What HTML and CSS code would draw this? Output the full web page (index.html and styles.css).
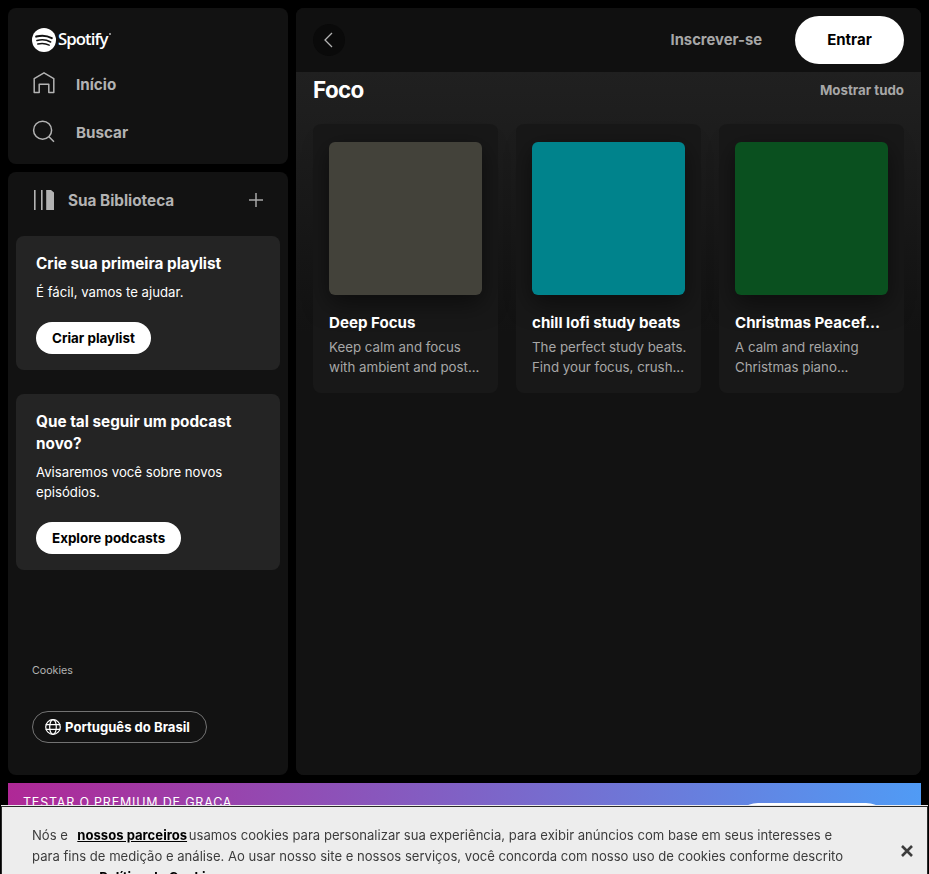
FILE: index.html
```html
<!DOCTYPE html>
<html lang="pt-BR">
<head>
    <meta charset="UTF-8">
    <meta name="viewport" content="width=device-width, initial-scale=1.0">
    <title>Spotify - Foco</title>
    <link rel="stylesheet" href="styles.css">
</head>
<body>
    <div class="app">
        <div class="sidebar">
            <nav class="nav-card">
                <a class="logo" href="#">
                    <svg width="24" height="24" viewBox="0 0 24 24">
                        <circle cx="12" cy="12" r="12" fill="#fff"/>
                        <path d="M4.2 8.6c5-1.4 11-1 15.6 1.5" fill="none" stroke="#121212" stroke-width="2.1" stroke-linecap="round"/>
                        <path d="M5 12.5c4.4-1.2 9.6-.8 13.6 1.4" fill="none" stroke="#121212" stroke-width="1.7" stroke-linecap="round"/>
                        <path d="M5.8 16c3.8-.9 8-.6 11.4 1.2" fill="none" stroke="#121212" stroke-width="1.4" stroke-linecap="round"/>
                    </svg>
                    <span class="logo-text">Spotify</span>
                </a>
                <a class="nav-item" href="#">
                    <svg width="24" height="24" viewBox="0 0 24 24" fill="none" stroke="#b3b3b3" stroke-width="1.5" stroke-linejoin="round">
                        <path d="M2.2 20.4V6.6L12 .8l9.8 5.8v13.8h-5v-8.2H7.2v8.2z"/>
                    </svg>
                    <span>Início</span>
                </a>
                <a class="nav-item" href="#">
                    <svg width="24" height="24" viewBox="0 0 24 24" fill="none" stroke="#b3b3b3" stroke-width="1.5">
                        <circle cx="10.6" cy="10.2" r="9"/>
                        <path d="M17 16.8l5 5"/>
                    </svg>
                    <span>Buscar</span>
                </a>
            </nav>

            <section class="library">
                <div class="library-head">
                    <svg width="20" height="20" viewBox="0 0 20 20" fill="#b3b3b3">
                        <rect x="0" y="0" width="1.6" height="20"/>
                        <rect x="7" y="0" width="1.6" height="20"/>
                        <path d="M12.2 0h4.8l3 2.5V20h-7.8z"/>
                    </svg>
                    <span class="library-title">Sua Biblioteca</span>
                    <svg class="plus" width="16" height="16" viewBox="0 0 16 16" stroke="#a7a7a7" stroke-width="1.5">
                        <path d="M8 1v14M1 8h14"/>
                    </svg>
                </div>

                <div class="promo">
                    <h3>Crie sua primeira playlist</h3>
                    <p>É fácil, vamos te ajudar.</p>
                    <a class="pill" href="#">Criar playlist</a>
                </div>

                <div class="promo">
                    <h3>Que tal seguir um podcast novo?</h3>
                    <p>Avisaremos você sobre novos episódios.</p>
                    <a class="pill" href="#">Explore podcasts</a>
                </div>

                <div class="library-foot">
                    <a class="cookies-link" href="#">Cookies</a>
                    <a class="lang" href="#">
                        <svg width="16" height="16" viewBox="0 0 16 16" fill="none" stroke="#fff" stroke-width="1.2">
                            <circle cx="8" cy="8" r="7.3"/>
                            <ellipse cx="8" cy="8" rx="3.3" ry="7.3"/>
                            <path d="M.7 5.6h14.6M.7 10.4h14.6"/>
                        </svg>
                        <span>Português do Brasil</span>
                    </a>
                </div>
            </section>
        </div>

        <main class="main">
            <header class="topbar">
                <button class="back">
                    <svg width="16" height="16" viewBox="0 0 16 16" fill="none" stroke="#b3b3b3" stroke-width="1.3">
                        <path d="M11 1L4 8l7 7"/>
                    </svg>
                </button>
                <a class="signup" href="#">Inscrever-se</a>
                <a class="login" href="#">Entrar</a>
            </header>

            <div class="content">
                <div class="section-head">
                    <h2>Foco</h2>
                    <a href="#">Mostrar tudo</a>
                </div>
                <div class="cards">
                    <div class="card">
                        <div class="cover cover-focus"></div>
                        <h4>Deep Focus</h4>
                        <p>Keep calm and focus with ambient and post...</p>
                    </div>
                    <div class="card">
                        <div class="cover cover-lofi"></div>
                        <h4>chill lofi study beats</h4>
                        <p>The perfect study beats. Find your focus, crush...</p>
                    </div>
                    <div class="card">
                        <div class="cover cover-xmas"></div>
                        <h4>Christmas Peacef...</h4>
                        <p>A calm and relaxing Christmas piano...</p>
                    </div>
                </div>
            </div>
        </main>

        <div class="banner">
            <span>TESTAR O PREMIUM DE GRAÇA</span>
            <a class="banner-btn" href="#"></a>
        </div>
    </div>

    <div class="cookie-bar">
        <p>Nós e &nbsp;<a class="partners" href="#">nossos parceiros</a> usamos cookies para personalizar sua experiência, para exibir anúncios com base em seus interesses e para fins de medição e análise. Ao usar nosso site e nossos serviços, você concorda com nosso uso de cookies conforme descrito em nossa <a class="plain" href="#">Política de Cookies</a>.</p>
        <svg class="cookie-close" width="12" height="12" viewBox="0 0 12 12" stroke="#3c3c3c" stroke-width="2.6">
            <path d="M1 1l10 10M11 1L1 11"/>
        </svg>
    </div>
</body>
</html>
```

FILE: styles.css
```css
* {
    box-sizing: border-box;
}

html, body {
    height: 100%;
}

body {
    background-color: #000000;
    color: #FFFFFF;
    font-family: Inter, "Noto Sans", sans-serif;
    margin: 0;
    padding: 0;
    overflow: hidden;
}

a {
    color: inherit;
    text-decoration: none;
}

.app {
    display: grid;
    grid-template-columns: 280px 625px;
    grid-template-rows: 767px 80px;
    gap: 8px;
    padding: 8px;
}

.sidebar {
    display: flex;
    flex-direction: column;
    gap: 8px;
    width: 280px;
}

.nav-card {
    background-color: #121212;
    border-radius: 8px;
    height: 156px;
    padding: 20px 24px 0;
}

.logo {
    display: flex;
    align-items: center;
    gap: 2px;
    height: 24px;
    margin-bottom: 8px;
}

.logo-text {
    font-family: "Open Sans", sans-serif;
    font-size: 16.8px;
    line-height: 22px;
    font-weight: 600;
    letter-spacing: -0.95px;
    margin-bottom: 2px;
}

.logo-text::after {
    content: "";
    display: inline-block;
    width: 2px;
    height: 2px;
    margin: 0 0 10px 1px;
    border-radius: 50%;
    background-color: #b3b3b3;
}

.nav-item {
    display: flex;
    align-items: center;
    gap: 20px;
    height: 48px;
    color: #b3b3b3;
    font-size: 15.2px;
    font-weight: 700;
}

.library {
    background-color: #121212;
    border-radius: 8px;
    height: 603px;
    padding: 0 8px;
    display: flex;
    flex-direction: column;
}

.library-head {
    display: flex;
    align-items: center;
    height: 56px;
    padding: 0 16px 0 18px;
    margin-bottom: 8px;
    gap: 14px;
    color: #b3b3b3;
}

.library-title {
    flex: 1;
    font-size: 15.3px;
    font-weight: 700;
}

.promo {
    background-color: #242424;
    border-radius: 8px;
    padding: 16px 20px;
    margin-bottom: 24px;
}

.promo h3 {
    margin: 1px 0 0;
    font-size: 15.3px;
    line-height: 22px;
    font-weight: 700;
}

.promo p {
    margin: 7px 0 20px;
    font-size: 13.2px;
    line-height: 20px;
}

.pill {
    display: inline-block;
    background-color: #FFFFFF;
    color: #000000;
    border-radius: 16px;
    height: 32px;
    line-height: 32px;
    padding: 0 16px;
    font-size: 13.4px;
    font-weight: 700;
}

.library-foot {
    margin-top: auto;
    padding: 0 16px 32px;
}

.cookies-link {
    display: block;
    font-size: 10.7px;
    color: #b3b3b3;
    margin-bottom: 34px;
}

.lang {
    display: inline-flex;
    align-items: center;
    gap: 4px;
    height: 32px;
    padding: 0 16px 0 12px;
    border: 1px solid #727272;
    border-radius: 16px;
    font-size: 13.1px;
    font-weight: 700;
}

.main {
    background-color: #121212;
    border-radius: 8px;
    height: 767px;
    overflow: hidden;
}

.topbar {
    display: flex;
    align-items: center;
    height: 64px;
    padding: 0 17px;
    background-color: #101010;
}

.back {
    width: 32px;
    height: 32px;
    padding: 0;
    border: none;
    border-radius: 50%;
    background-color: #0a0a0a;
    display: flex;
    align-items: center;
    justify-content: center;
    margin-right: auto;
}

.signup {
    color: #a7a7a7;
    font-size: 14.8px;
    font-weight: 700;
    margin-right: 33px;
}

.login {
    width: 109px;
    height: 48px;
    line-height: 48px;
    text-align: center;
    background-color: #FFFFFF;
    color: #000000;
    border-radius: 24px;
    font-size: 15px;
    font-weight: 700;
}

.content {
    height: 703px;
    padding: 0 17px;
    background: linear-gradient(#202020, #121212 260px);
}

.section-head {
    display: flex;
    justify-content: space-between;
    align-items: center;
    height: 35px;
    margin-bottom: 17px;
}

.section-head h2 {
    margin: 0;
    font-size: 22.4px;
    font-weight: 700;
    letter-spacing: -0.6px;
}

.section-head a {
    color: #a7a7a7;
    font-size: 13.3px;
    font-weight: 700;
}

.cards {
    display: grid;
    grid-template-columns: repeat(3, 185px);
    column-gap: 18px;
}

.card {
    background-color: #181818;
    border-radius: 8px;
    height: 269px;
    padding: 18px 16px 0;
}

.cover {
    height: 153px;
    border-radius: 6px;
    box-shadow: 0 8px 24px rgba(0, 0, 0, 0.5);
}

.cover-focus {
    background-color: #43423a;
}

.cover-lofi {
    background-color: #00838c;
}

.cover-xmas {
    background-color: #0a501f;
}

.card h4 {
    margin: 18px 0 4px;
    font-size: 15.1px;
    line-height: 20px;
    font-weight: 700;
    white-space: nowrap;
    overflow: hidden;
}

.card p {
    margin: 0 -4px 0 0;
    color: #a7a7a7;
    font-size: 13.3px;
    line-height: 20px;
}

.banner {
    grid-column: 1 / 3;
    height: 80px;
    padding: 12px 15px;
    display: flex;
    justify-content: space-between;
    background: linear-gradient(90deg, #af2896, #509bf5);
    font-size: 12.5px;
    letter-spacing: 0.8px;
}

.banner-btn {
    width: 156px;
    height: 48px;
    margin: 8px 16px 0 0;
    background-color: #FFFFFF;
    border-radius: 24px;
}

.cookie-bar {
    position: fixed;
    left: 1px;
    right: 1px;
    top: 806px;
    height: 120px;
    background-color: #ededed;
    border: 1px solid #2a2a2a;
    box-shadow: 0 -1px 0 #ededed;
    color: #3c3c3c;
    padding: 18px 30px;
}

.cookie-bar p {
    margin: 0;
    width: 815px;
    font-size: 13.1px;
    line-height: 21px;
}

.cookie-bar a {
    color: #000000;
    font-weight: 700;
    text-decoration: underline;
}

.cookie-bar a.partners {
    margin: 0 -2px 0 2px;
}

.cookie-bar a.plain {
    margin-left: 4px;
    text-decoration: none;
}

.cookie-close {
    position: absolute;
    left: 899px;
    top: 38px;
}
```
